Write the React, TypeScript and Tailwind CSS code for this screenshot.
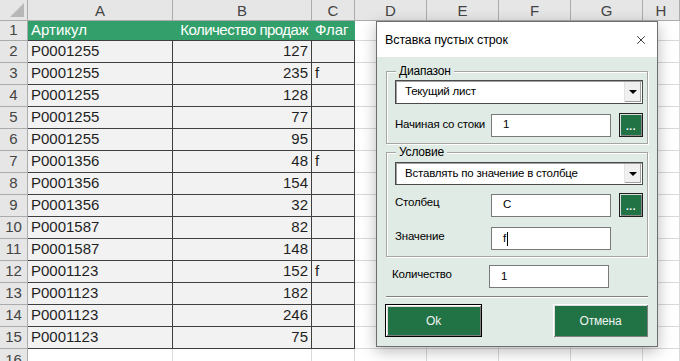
import { X } from 'lucide-react';

const cols = ['A', 'B', 'C', 'D', 'E', 'F', 'G', 'H'];
const widths = ['w-[145px]', 'w-[139px]', 'w-[43px]', 'w-[72px]', 'w-[72px]', 'w-[72px]', 'w-[72px]', 'flex-1'];

const rows: [string, number, string][] = [
  ['P0001255', 127, ''],
  ['P0001255', 235, 'f'],
  ['P0001255', 128, ''],
  ['P0001255', 77, ''],
  ['P0001255', 95, ''],
  ['P0001356', 48, 'f'],
  ['P0001356', 154, ''],
  ['P0001356', 32, ''],
  ['P0001587', 82, ''],
  ['P0001587', 148, ''],
  ['P0001123', 152, 'f'],
  ['P0001123', 182, ''],
  ['P0001123', 246, ''],
  ['P0001123', 75, ''],
];

function EmptyCells() {
  return (
    <>
      {widths.slice(3).map((w, i) => (
        <div key={i} className={`${w} shrink-0 border-r border-b border-[#d9d9d9] bg-white`} />
      ))}
    </>
  );
}

function Sheet() {
  return (
    <div className="flex flex-col text-[15px] text-[#1f1f1f] whitespace-nowrap">
      {/* column headers */}
      <div className="flex h-[21px] bg-[#e6e6e6] text-[#444]">
        <div className="w-[28px] shrink-0 border-r border-b border-[#ababab] relative">
          <div className="absolute right-[3px] bottom-[3px] w-0 h-0 border-l-[14px] border-l-transparent border-b-[14px] border-b-[#b7b7b7]" />
        </div>
        {cols.map((c, i) => (
          <div key={c} className={`${widths[i]} shrink-0 border-r border-b border-[#ababab] flex items-center justify-center leading-none`}>
            {c}
          </div>
        ))}
      </div>

      {/* row 1 */}
      <div className="flex h-[20px]">
        <div className="w-[28px] shrink-0 bg-[#e6e6e6] border-r border-b border-[#ababab] text-[#444] flex items-center justify-center">1</div>
        <div className="w-[327px] shrink-0 flex bg-[#33a06b] text-white border-b border-[#3f3f3f] items-center">
          <div className="w-[145px] pl-[3px]">Артикул</div>
          <div className="w-[139px] pr-[4px] text-right tracking-[-0.5px]">Количество продаж</div>
          <div className="w-[43px] pl-[3px]">Флаг</div>
        </div>
        <EmptyCells />
      </div>

      {rows.map(([art, qty, flag], i) => (
        <div key={i} className="flex h-[22px]">
          <div className="w-[28px] shrink-0 bg-[#e6e6e6] border-r border-b border-[#ababab] text-[#444] flex items-center justify-center">
            {i + 2}
          </div>
          <div className="w-[145px] shrink-0 bg-[#f2f2f2] border-r border-b border-[#3f3f3f] pl-[3px] flex items-center">{art}</div>
          <div className="w-[139px] shrink-0 bg-[#f2f2f2] border-r border-b border-[#3f3f3f] pr-[3px] flex items-center justify-end">{qty}</div>
          <div className="w-[43px] shrink-0 bg-[#f2f2f2] border-r border-b border-[#3f3f3f] pl-[3px] flex items-center">{flag}</div>
          <EmptyCells />
        </div>
      ))}

      <div className="flex h-[22px]">
        <div className="w-[28px] shrink-0 bg-[#e6e6e6] border-r border-[#ababab] text-[#444] flex items-start justify-center">16</div>
        <div className="w-[145px] shrink-0 border-r border-[#d9d9d9] bg-white" />
        <div className="w-[139px] shrink-0 border-r border-[#d9d9d9] bg-white" />
        <div className="w-[43px] shrink-0 border-r border-[#d9d9d9] bg-white" />
        <EmptyCells />
      </div>
    </div>
  );
}

function Select({ value }: { value: string }) {
  return (
    <div className="flex h-full bg-white border border-[#4a4a4a] shadow-[inset_1px_1px_0_#a0a0a0]">
      <div className="flex-1 pl-[9px] flex items-center">{value}</div>
      <div className="w-[17px] my-[1px] mr-[1px] bg-[#f0f0f0] border-l border-[#e3e3e3] shadow-[inset_-1px_-1px_0_#a0a0a0] flex items-center justify-center">
        <div className="w-0 h-0 border-l-[4px] border-r-[4px] border-t-[4px] border-l-transparent border-r-transparent border-t-black" />
      </div>
    </div>
  );
}

function Input({ value, caret }: { value: string; caret?: boolean }) {
  return (
    <div className="w-[120px] h-[23px] bg-white border border-[#7a7a7a] pl-[11px] flex items-center">
      {value}
      {caret && <span className="ml-[1px] w-px h-[14px] bg-black" />}
    </div>
  );
}

function DotsButton() {
  return (
    <div className="w-[24px] h-[24px] border border-[#1e1e1e] bg-[#217346] shadow-[inset_1px_1px_0_#dcdcdc,inset_-1px_-1px_0_#8a8a8a] flex items-end justify-center pb-[4px] text-white text-[10px] leading-none font-bold tracking-[0.5px]">
      ...
    </div>
  );
}

function Group({ title, children, className }: { title: string; children: React.ReactNode; className: string }) {
  return (
    <div className={`relative border border-[#a5a5a5] shadow-[inset_1px_1px_0_#fff,1px_1px_0_#fff] pl-[8px] pr-[4px] ${className}`}>
      <span className="absolute left-[9px] -top-[8px] px-[3px] bg-[#e1ebe5] leading-[14px] text-[12px]">{title}</span>
      {children}
    </div>
  );
}

function Dialog() {
  return (
    <div className="absolute left-[376px] top-[21px] w-[282px] h-[326px] border border-[#6e6e6e] bg-[#e1ebe5] shadow-[0_4px_14px_rgba(0,0,0,0.28)] flex flex-col text-[11.5px] tracking-[-0.2px] text-black whitespace-nowrap">
      <div className="h-[35px] bg-white flex items-center justify-between pl-[8px] pr-[9px] text-[12.5px] tracking-[-0.1px]">
        <span className="pt-[2px]">Вставка пустых строк</span>
        <X className="w-[14px] h-[14px]" strokeWidth={1.3} />
      </div>
      <div className="flex-1 px-[9px] pt-[14px]">
        <Group title="Диапазон" className="h-[73px] pt-[8px]">
          <div className="h-[24px]">
            <Select value="Текущий лист" />
          </div>
          <div className="flex items-center mt-[9px]">
            <div className="w-[96px]">Начиная со стоки</div>
            <Input value="1" />
            <div className="ml-[8px]"><DotsButton /></div>
          </div>
        </Group>
        <Group title="Условие" className="h-[105px] mt-[8px] pt-[9px]">
          <div className="h-[23px]">
            <Select value="Вставлять по значение в столбце" />
          </div>
          <div className="flex items-center mt-[8px]">
            <div className="w-[96px] self-start pt-[1px]">Столбец</div>
            <Input value="C" />
            <div className="ml-[8px]"><DotsButton /></div>
          </div>
          <div className="flex items-center mt-[10px]">
            <div className="w-[96px] self-start pt-[1px]">Значение</div>
            <Input value="f" caret />
          </div>
        </Group>
        <div className="flex mt-[8px] pl-[6px]">
          <div className="w-[97px] pt-[1px]">Количество</div>
          <Input value="1" />
        </div>
        <div className="mt-[8px] h-[2px] border-t border-[#808080] border-b border-b-white" />
        <div className="flex justify-between mt-[6px]">
          <button className="w-[97px] h-[33px] border border-black bg-[#217346] shadow-[inset_1px_1px_0_#fff,inset_-1px_-1px_0_#808080,inset_2px_2px_0_#dcdcdc] text-[#eef5f0] text-[12px] -ml-[1px]">Ok</button>
          <button className="w-[95px] h-[33px] bg-[#217346] shadow-[inset_1px_1px_0_#fff,inset_-1px_-1px_0_#808080,inset_2px_2px_0_#dcdcdc] text-[#eef5f0] text-[12px]">Отмена</button>
        </div>
      </div>
    </div>
  );
}

export default function App() {
  return (
    <div className="relative w-[680px] h-[361px] overflow-hidden bg-white" style={{ fontFamily: '"Liberation Sans", Arial, sans-serif' }}>
      <Sheet />
      <Dialog />
    </div>
  );
}
